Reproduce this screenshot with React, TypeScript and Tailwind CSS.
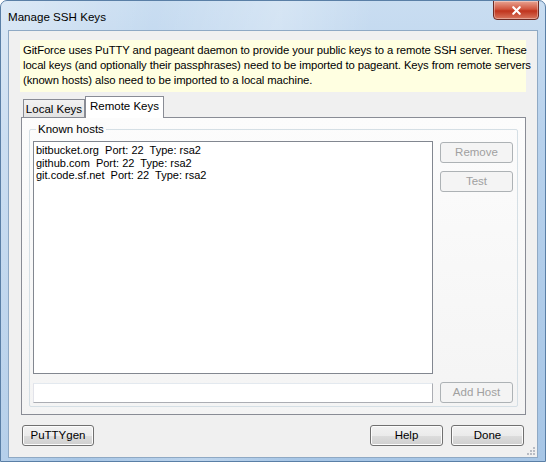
import { X } from 'lucide-react';

const hosts = [
  'bitbucket.org  Port: 22  Type: rsa2',
  'github.com  Port: 22  Type: rsa2',
  'git.code.sf.net  Port: 22  Type: rsa2',
];

function WinButton({ label, disabled, className }: { label: string; disabled?: boolean; className: string }) {
  if (disabled) {
    return (
      <div
        className={`flex items-center justify-center rounded-[3px] border border-[#adb2b5] bg-[#f4f4f4] text-[#a0a0a0] ${className}`}
      >
        {label}
      </div>
    );
  }
  return (
    <div
      className={`flex items-center justify-center rounded-[3px] border border-[#707070] bg-[linear-gradient(#f2f2f2_0%,#ebebeb_50%,#dddddd_51%,#cfcfcf_100%)] shadow-[inset_0_0_0_1px_#fcfcfc] text-black ${className}`}
    >
      {label}
    </div>
  );
}

export default function App() {
  return (
    <div
      className="relative w-[546px] h-[462px] overflow-hidden rounded-t-[7px] border border-[#5a7fa6] bg-[linear-gradient(180deg,#c9ddf1_0%,#b7d1ec_30%,#a7c6e6_100%)] text-[11.5px] leading-[15px] text-black"
      style={{ fontFamily: '"Liberation Sans", Arial, sans-serif' }}
    >
      <div className="pointer-events-none absolute inset-0 bg-[linear-gradient(100deg,rgba(255,255,255,0.35)_0%,rgba(255,255,255,0)_25%,rgba(255,255,255,0.25)_45%,rgba(255,255,255,0)_60%)]" />
      {/* title bar */}
      <div className="relative flex h-[29px] items-center pl-[7px] pt-[1px] text-[11.6px] text-black">
        Manage SSH Keys
      </div>
      <div className="absolute right-[6px] top-[-1px] flex h-[20px] w-[46px] items-center justify-center rounded-b-[4px] border border-[#6d2b24] bg-[linear-gradient(#e8a493_0%,#d1563f_45%,#c0341d_55%,#d8765e_100%)] shadow-[inset_0_0_0_1px_rgba(255,255,255,0.35)]">
        <X className="h-[13px] w-[13px] text-white" strokeWidth={4} />
      </div>

      {/* client area */}
      <div className="relative mx-[7px] h-[428px] border border-[#8fa9c4] bg-[#f0f0f0]">
        <div className="ml-[11px] mt-[9px] h-[52px] w-[506px] bg-[#ffffe1] px-[3px] pt-[3px] text-[11.3px] leading-[15px] tracking-[-0.1px] whitespace-nowrap">
          GitForce uses PuTTY and pageant daemon to provide your public keys to a remote SSH server. These
          <br />
          local keys (and optionally their passphrases) need to be imported to pageant. Keys from remote servers
          <br />
          (known hosts) also need to be imported to a local machine.
        </div>

        {/* tabs */}
        <div className="ml-[14px] mt-[4px] flex h-[21px] items-end">
          <div className="mb-0 flex h-[18px] w-[62px] items-center justify-center border border-b-0 border-[#898c95] bg-[linear-gradient(#f2f2f2,#e3e3e3)] pt-[1px]">
            Local Keys
          </div>
          <div className="relative z-10 mb-[-1px] flex h-[22px] w-[79px] items-center justify-center border border-b-0 border-[#898c95] bg-white pb-[2px]">
            Remote Keys
          </div>
        </div>

        {/* tab panel */}
        <div className="ml-[12px] h-[298px] w-[505px] border border-[#898c95] bg-[linear-gradient(#fcfcfc,#f4f4f4)] px-[7px] pb-[7px] pt-[11px]">
          <div className="relative h-[278px] border border-[#d5dfe5] rounded-[2px] px-[3px] pt-[11px]">
            <div className="absolute left-[6px] top-[-8px] bg-[#fbfbfb] px-[2px]">Known hosts</div>
            <div className="flex gap-[7px]">
              <div className="h-[233px] w-[400px] border border-[#828790] bg-white px-[2px] pt-[2px] text-[11px] leading-[12.6px]">
                {hosts.map(h => (
                  <div key={h} className="whitespace-pre">{h}</div>
                ))}
              </div>
              <div className="flex flex-col gap-[8px] pt-[1px]">
                <WinButton label="Remove" disabled className="h-[21px] w-[73px]" />
                <WinButton label="Test" disabled className="h-[21px] w-[73px]" />
              </div>
            </div>
            <div className="mt-[8px] flex items-center gap-[7px]">
              <div className="h-[20px] w-[400px] border border-[#abadb3] border-t-[#e3e9ef] border-l-[#e2e3ea] bg-white" />
              <WinButton label="Add Host" disabled className="h-[21px] w-[73px]" />
            </div>
          </div>
        </div>

        {/* bottom buttons */}
        <div className="mt-[10px] flex pl-[13px] pr-[13px]">
          <WinButton label="PuTTYgen" className="h-[21px] w-[72px]" />
          <div className="flex-1" />
          <WinButton label="Help" className="h-[21px] w-[73px]" />
          <WinButton label="Done" className="ml-[8px] h-[21px] w-[73px]" />
        </div>

        {/* size grip */}
        <svg className="absolute bottom-[1px] right-[1px]" width="11" height="11" viewBox="0 0 11 11">
          {[[8, 2], [8, 5], [5, 5], [8, 8], [5, 8], [2, 8]].map(([x, y]) => (
            <rect key={`${x}-${y}`} x={x} y={y} width="2" height="2" fill="#b8bcc4" />
          ))}
        </svg>
      </div>
    </div>
  );
}
